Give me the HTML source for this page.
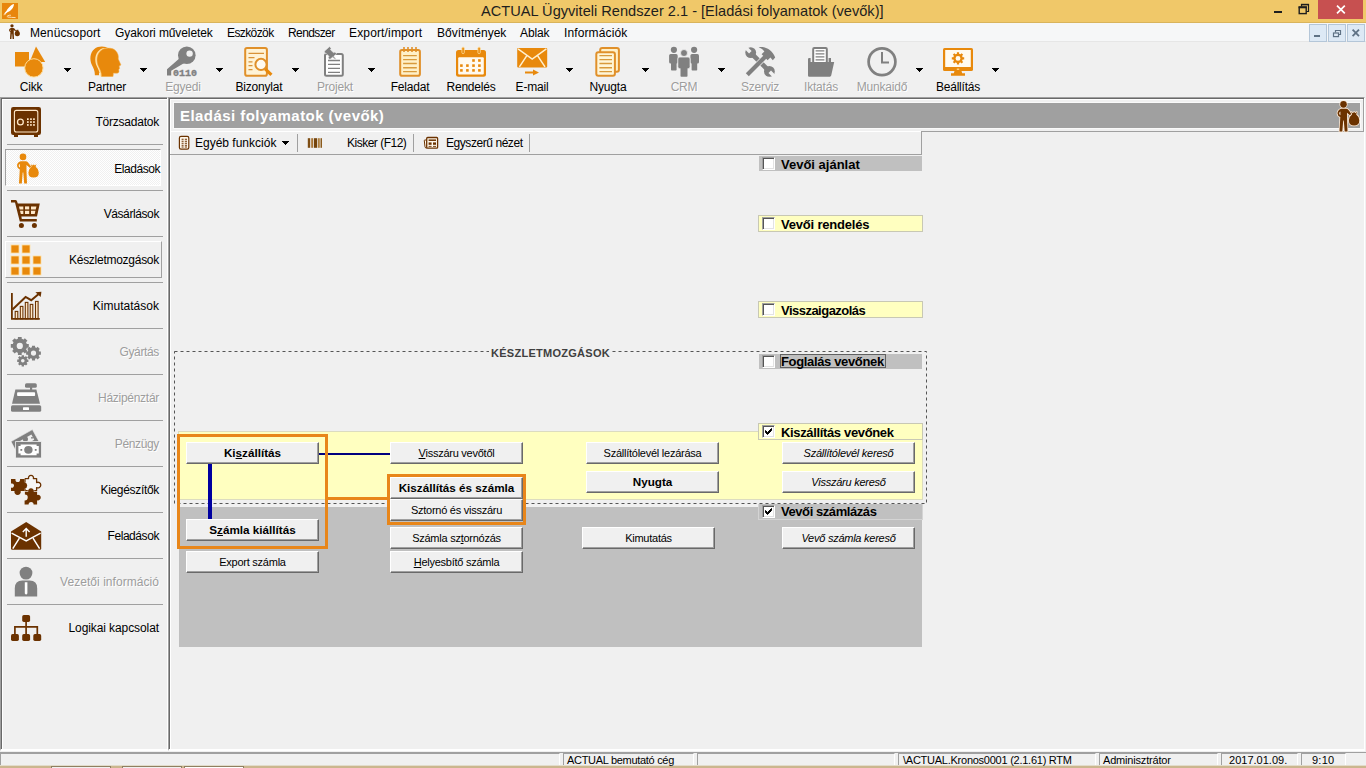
<!DOCTYPE html>
<html><head><meta charset="utf-8">
<style>
html,body{margin:0;padding:0;}
body{width:1366px;height:768px;overflow:hidden;background:#f0f0f0;position:relative;font-family:"Liberation Sans",sans-serif;font-size:12px;color:#000;}
.a{position:absolute;}
.t{position:absolute;white-space:nowrap;line-height:14px;}
svg{position:absolute;overflow:visible;}
/* title */
#title{left:0;top:0;width:1366px;height:22px;background:#f0c869;}
#titleline{left:0;top:22px;width:1366px;height:1px;background:#d9b45c;}
#menu{left:0;top:23px;width:1366px;height:18px;background:#f6f7f8;}
.mi{top:26px;}
.mdi{top:24px;width:16px;height:16px;background:#dde9f5;border:1px solid #b4c6d8;box-sizing:content-box;}
/* toolbar */
.tl{top:80px;width:76px;text-align:center;letter-spacing:-0.2px;}
.dis{color:#9d9d9d;text-shadow:1px 1px 0 #fff;}
.arr{top:68px;width:7px;height:4px;background:linear-gradient(#000,#000) 0 0/7px 1px no-repeat,linear-gradient(#000,#000) 1px 1px/5px 1px no-repeat,linear-gradient(#000,#000) 2px 2px/3px 1px no-repeat,linear-gradient(#000,#000) 3px 3px/1px 1px no-repeat;}
/* panels */
.sunk{box-sizing:border-box;border-top:1px solid #a0a0a0;border-left:1px solid #a0a0a0;border-right:1px solid #fff;border-bottom:2px solid #fff;box-shadow:inset 1px 1px 0 #696969,inset 2px 2px 0 #fff;}
.sep{left:7px;width:156px;height:1px;background:#a0a0a0;}
.sl{left:40px;width:119px;text-align:right;}
/* classic button */
.btn{box-sizing:border-box;height:22px;width:133px;background:#f0f0f0;border-top:1px solid #fff;border-left:1px solid #fff;border-right:1px solid #696969;border-bottom:1px solid #696969;box-shadow:inset -1px -1px 0 #a0a0a0;text-align:center;font-size:11px;letter-spacing:-0.25px;line-height:20px;white-space:nowrap;}
.btn b{font-size:11.7px;letter-spacing:0;}
.btn i{font-style:italic;}
.cb{width:13px;height:13px;box-sizing:border-box;background:#fff;border-top:1px solid #a0a0a0;border-left:1px solid #a0a0a0;border-right:1px solid #fff;border-bottom:1px solid #fff;box-shadow:inset 1px 1px 0 #555,inset -1px -1px 0 #e3e3e3;}
.lab{font-weight:bold;font-size:13px;line-height:15px;}
.ybar{box-sizing:border-box;background:#ffffc0;border:1px solid #c8c8b4;}
.sbar{background:#c0c0c0;}
.sp{top:753px;height:13px;box-sizing:border-box;border-top:1px solid #a0a0a0;border-left:1px solid #a0a0a0;border-right:1px solid #fff;}
.st{top:754px;z-index:3;font-size:11px;line-height:12px;}
</style></head><body>

<!-- TITLE BAR -->
<div id="title" class="a"></div>
<div id="titleline" class="a"></div>
<div class="t" style="left:481px;top:2px;font-size:14.6px;line-height:18px;color:#1e1e1e;">ACTUAL Ügyviteli Rendszer 2.1 - [Eladási folyamatok (vevők)]</div>
<div class="a" style="left:1318px;top:0;width:45px;height:19px;background:#c75050"></div>
<div class="a" style="left:1274px;top:11px;width:8px;height:2px;background:#1e1e1e"></div>

<!-- MENU BAR -->
<div id="menu" class="a"></div>
<div class="a" style="left:0;top:41px;width:1366px;height:1px;background:#e6e6e6"></div>
<div class="t mi" style="left:30px;letter-spacing:0.1px">Menücsoport</div>
<div class="t mi" style="left:115px;letter-spacing:-0.1px">Gyakori műveletek</div>
<div class="t mi" style="left:227px;letter-spacing:-0.6px">Eszközök</div>
<div class="t mi" style="left:288px;letter-spacing:-0.6px">Rendszer</div>
<div class="t mi" style="left:349px;letter-spacing:0.15px">Export/import</div>
<div class="t mi" style="left:437px">Bővítmények</div>
<div class="t mi" style="left:520px;letter-spacing:-0.1px">Ablak</div>
<div class="t mi" style="left:564px;letter-spacing:0.12px">Információk</div>
<div class="a mdi" style="left:1309px"></div>
<div class="a mdi" style="left:1328px"></div>
<div class="a mdi" style="left:1347px"></div>

<!-- TOOLBAR -->
<div id="tb">
<div class="t tl" style="left:-7px">Cikk</div><div class="a arr" style="left:64px"></div>
<div class="t tl" style="left:69px">Partner</div><div class="a arr" style="left:140px"></div>
<div class="t tl dis" style="left:145px">Egyedi</div><div class="a arr" style="left:216px"></div>
<div class="t tl" style="left:221px">Bizonylat</div><div class="a arr" style="left:292px"></div>
<div class="t tl dis" style="left:297px">Projekt</div><div class="a arr" style="left:368px"></div>
<div class="t tl" style="left:372px">Feladat</div>
<div class="t tl" style="left:433px">Rendelés</div>
<div class="t tl" style="left:494px">E-mail</div><div class="a arr" style="left:566px"></div>
<div class="t tl" style="left:570px">Nyugta</div><div class="a arr" style="left:642px"></div>
<div class="t tl dis" style="left:646px">CRM</div><div class="a arr" style="left:718px"></div>
<div class="t tl dis" style="left:722px">Szerviz</div>
<div class="t tl dis" style="left:783px">Iktatás</div>
<div class="t tl dis" style="left:844px">Munkaidő</div><div class="a arr" style="left:916px"></div>
<div class="t tl" style="left:920px">Beállítás</div><div class="a arr" style="left:992px"></div>
</div>

<!-- TOOLBAR ICONS -->
<svg width="1366" height="110" style="left:0;top:0" id="tbicons">
<defs>
<path id="head" d="M101.5 76.7 C101.5 72 100 69.5 98.5 66.5 C96 61 96.5 54 101 50.5 C105 47.3 112 47.3 115.5 50.5 C118 53 118.8 56 118.3 59 L121 65 L119.2 66 L119.6 68.6 L118.8 69.6 L119 72 C118.5 73.5 116 73.4 113.5 73 L113 76.7 Z"/>
</defs>
<!-- Cikk -->
<rect x="15" y="52" width="14" height="14.5" fill="#e8890c"/>
<path d="M36 46.6 L45.2 62 L29.6 62Z" fill="#e8890c"/>
<circle cx="33.9" cy="67.9" r="9.2" fill="#e8890c" stroke="#ffdf9e" stroke-width="1"/>
<!-- Partner -->
<use href="#head" transform="translate(-6.6,-1.5)" fill="#e8890c"/>
<rect x="99" y="73" width="3" height="4" fill="#f0f0f0"/>
<use href="#head" transform="translate(-1.7,-0.3)" fill="#ffe6b0"/>
<use href="#head" fill="#e8890c" stroke="#f3b457" stroke-width="0.5"/>
<rect x="100" y="76.9" width="15" height="2" fill="#f0f0f0"/>
<!-- Egyedi -->
<circle cx="186.8" cy="55.2" r="8.8" fill="#808080"/>
<circle cx="189.6" cy="53.6" r="3.2" fill="#f0f0f0"/>
<path d="M181 57 L167 69.2 L167 75.6 L171.2 75.6 L171.2 70.8 L186 62Z" fill="#808080"/>
<text x="173" y="75.7" font-family="Liberation Mono, monospace" font-weight="bold" font-size="9.8" textLength="24" lengthAdjust="spacingAndGlyphs" fill="#808080" stroke="#808080" stroke-width="0.35">0110</text>
<!-- Bizonylat -->
<rect x="245.2" y="48.1" width="21.7" height="27.6" rx="1.8" fill="#fff3d6" stroke="#e0902a" stroke-width="2"/>
<path d="M248.5 53.4H264 M248.5 57.6H254.5 M248.5 61.8H252.5 M248.5 65.7H252.5 M248.5 69.7H252.5" stroke="#d89238" stroke-width="1.2"/>
<circle cx="261" cy="64.4" r="5.6" fill="#fffaf0" stroke="#e0902a" stroke-width="2"/>
<path d="M265.2 68.8 L271.4 74.8" stroke="#e8890c" stroke-width="3.2"/>
<!-- Projekt -->
<rect x="325" y="54" width="17.8" height="21.7" rx="1.5" fill="#fff" stroke="#808080" stroke-width="2"/>
<path d="M328 60.5H340 M328 64.4H340 M328 68.4H340 M328 72.3H340" stroke="#808080" stroke-width="1.3"/>
<path d="M324.3 51.3 L329.6 46.6 L331.2 48.4 L330.3 49.6 L333.4 52.6 L335 52 L336.6 53.8 L333.8 56.2 L336 59 L335.4 59.5 L332.6 57.2 L329.8 59.6 L328.2 57.8 L329 56.4 L326 53.2 L325 53.4Z" fill="#808080" stroke="#f0f0f0" stroke-width="0.6"/>
<!-- Feladat -->
<rect x="400.2" y="50" width="19.7" height="25.7" rx="1.8" fill="#fff0c8" stroke="#e0902a" stroke-width="2"/>
<path d="M404 47V52 M408 47V52 M412 47V52 M416 47V52" stroke="#e0902a" stroke-width="1.6"/>
<path d="M403.1 55.6H416.8 M403.1 59.6H416.8 M403.1 63.5H416.8 M403.1 67.7H416.8 M403.1 71.6H416.8" stroke="#d89a3c" stroke-width="1.4"/>
<!-- Rendeles -->
<rect x="456" y="50" width="30" height="26.7" rx="2.5" fill="#e8890c"/>
<rect x="458.2" y="57.2" width="25.6" height="17.4" rx="1" fill="#fffaf0"/>
<rect x="461.9" y="47.2" width="2.4" height="6.4" rx="1" fill="#e8890c" stroke="#ffdf9e" stroke-width="0.8"/>
<rect x="477.9" y="47.2" width="2.4" height="6.4" rx="1" fill="#e8890c" stroke="#ffdf9e" stroke-width="0.8"/>
<g fill="#e8890c">
<rect x="472.2" y="59.2" width="2.6" height="2.6"/><rect x="478.1" y="59.2" width="2.6" height="2.6"/>
<rect x="460.1" y="64.3" width="2.6" height="2.6"/><rect x="466.1" y="64.3" width="2.6" height="2.6"/><rect x="472.2" y="64.3" width="2.6" height="2.6"/><rect x="478.1" y="64.3" width="2.6" height="2.6"/>
<rect x="460.1" y="69.1" width="2.6" height="2.6"/><rect x="466.1" y="69.1" width="2.6" height="2.6"/><rect x="472.2" y="69.1" width="2.6" height="2.6"/><rect x="478.1" y="69.1" width="2.6" height="2.6"/>
</g>
<!-- E-mail -->
<rect x="517.2" y="48" width="30" height="19.5" rx="1" fill="#e8890c"/>
<path d="M518 48.8 L532.2 59 L546.4 48.8" stroke="#fff0d0" stroke-width="1.5" fill="none"/>
<path d="M527 55.4 L519.4 66.8 M537.4 55.4 L545 66.8" stroke="#fff0d0" stroke-width="1.5"/>
<path d="M525 71.6 H533 V69.6 L539 72.6 L533 75.6 V73.6 H525Z" fill="#e8890c"/>
<!-- Nyugta -->
<rect x="600.2" y="48.1" width="18.7" height="23.7" rx="2" fill="#fff0c8" stroke="#e0902a" stroke-width="2"/>
<rect x="596.3" y="52.2" width="18.6" height="23.5" rx="2" fill="#fff6d8" stroke="#e0902a" stroke-width="2"/>
<path d="M599.4 55.6H612 M599.4 59.6H612 M599.4 63.5H612 M599.4 67.7H612 M599.4 71.6H612" stroke="#d89a3c" stroke-width="1.4"/>
<!-- CRM -->
<g fill="#808080">
<circle cx="673.9" cy="49.8" r="3.1"/><rect x="669.1" y="54.1" width="8.6" height="9.5" rx="1.6"/><rect x="671" y="60" width="5.6" height="10.6" rx="0.8"/>
<circle cx="694.1" cy="49.8" r="3.1"/><rect x="690.4" y="54.1" width="8.6" height="9.5" rx="1.6"/><rect x="691.6" y="60" width="5.6" height="10.6" rx="0.8"/>
<circle cx="684" cy="53" r="3.5" stroke="#f0f0f0" stroke-width="0.8"/>
<rect x="677.8" y="57" width="12.3" height="11.8" rx="2" stroke="#f0f0f0" stroke-width="0.8"/><rect x="680.5" y="66" width="7" height="10.7" rx="0.8"/>
</g>
<!-- Szerviz -->
<g>
<path d="M752 54 L768.5 70.5" stroke="#808080" stroke-width="4.6"/>
<circle cx="750.7" cy="52.6" r="5.4" fill="#808080"/>
<rect x="-1.8" y="-7.4" width="3.6" height="6.6" transform="translate(750.9,52.8) rotate(-45)" fill="#f0f0f0"/>
<circle cx="769.4" cy="71.4" r="5.4" fill="#808080"/>
<rect x="-1.8" y="-7.4" width="3.6" height="6.6" transform="translate(769.2,71.2) rotate(135)" fill="#f0f0f0"/>
<path d="M747.3 74.7 L765.5 56.5" stroke="#f0f0f0" stroke-width="5.6"/>
<path d="M747.3 74.7 L765.5 56.5" stroke="#808080" stroke-width="4.2"/>
<path d="M758.6 47.3 C765 45.8 772.4 50 775.2 57.6 L772.8 60.2 L770.4 57.6 L767.6 60.2 L761.6 54.2 L764.4 51.4 C763 49.6 761 48.4 758.6 47.3Z" fill="#808080"/>
</g>
<!-- Iktatas -->
<rect x="813.2" y="48.1" width="13.6" height="16" rx="1" fill="#fff" stroke="#808080" stroke-width="2"/>
<path d="M815.6 50.9H824.4 M815.6 53.9H824.4 M815.6 56.9H824.4 M815.6 59.9H824.4" stroke="#808080" stroke-width="1.3"/>
<path d="M808 59 Q808 58 809.3 58 L810.6 58 L810.6 62 L834.2 62 L831.2 75.6 Q831 76.7 829.8 76.7 L809.2 76.7 Q808 76.7 808 75.5Z" fill="#808080"/>
<rect x="828.6" y="58" width="2.4" height="5" fill="#808080"/>
<!-- Munkaido -->
<circle cx="882" cy="61.8" r="13.4" fill="none" stroke="#808080" stroke-width="2.7"/>
<path d="M882 52 V62.4 H889" fill="none" stroke="#808080" stroke-width="2"/>
<!-- Beallitas -->
<rect x="943" y="48" width="30" height="23" rx="1.6" fill="#e8890c"/>
<rect x="945.2" y="50" width="25.6" height="17" fill="#fffaf0"/>
<g stroke="#e8890c" stroke-width="2.2">
<path d="M958 52.2V64.6 M951.8 58.4H964.2 M953.6 54 L962.4 62.8 M962.4 54 L953.6 62.8"/>
</g>
<circle cx="958" cy="58.4" r="3.6" fill="#fffaf0" stroke="#e8890c" stroke-width="2.3"/>
<rect x="956.8" y="68.6" width="2.4" height="1.2" fill="#ffdf9e"/>
<path d="M954.5 71 H961.5 L962.2 73.2 H965 V75.8 H951 V73.2 H953.8Z" fill="#e8890c"/>
</svg>

<!-- SIDEBAR PANEL -->
<div class="a sunk" style="left:0;top:97px;width:168px;height:654px;"></div>
<div id="side">
<div class="a" style="left:5px;top:149px;width:156px;height:37px;box-sizing:border-box;background:#f8f8f8 conic-gradient(#fff 25%,#f0f0f0 0 50%,#fff 0 75%,#f0f0f0 0) 0 0/2px 2px;border-top:1px solid #a0a0a0;border-left:1px solid #a0a0a0;border-right:1px solid #fff;border-bottom:1px solid #fff;"></div>
<div class="a" style="left:5px;top:241px;width:157px;height:37px;box-sizing:border-box;border:1px solid #fff;border-right-color:#a0a0a0;border-bottom-color:#a0a0a0;"></div>
<div class="a sep" style="top:144px"></div><div class="a sep" style="top:190px"></div><div class="a sep" style="top:236px"></div>
<div class="a sep" style="top:282px"></div><div class="a sep" style="top:328px"></div><div class="a sep" style="top:374px"></div>
<div class="a sep" style="top:420px"></div><div class="a sep" style="top:466px"></div><div class="a sep" style="top:512px"></div>
<div class="a sep" style="top:558px"></div><div class="a sep" style="top:604px"></div>
<div class="t sl" style="top:115px;letter-spacing:-0.23px">Törzsadatok</div>
<div class="t sl" style="top:162px;left:41px;letter-spacing:-0.45px">Eladások</div>
<div class="t sl" style="top:207px;letter-spacing:-0.4px">Vásárlások</div>
<div class="t sl" style="top:253px;letter-spacing:-0.27px">Készletmozgások</div>
<div class="t sl" style="top:299px;letter-spacing:0.02px">Kimutatások</div>
<div class="t sl dis" style="top:345px;letter-spacing:-0.36px">Gyártás</div>
<div class="t sl dis" style="top:391px;letter-spacing:-0.28px">Házipénztár</div>
<div class="t sl dis" style="top:437px;letter-spacing:-0.36px">Pénzügy</div>
<div class="t sl" style="top:483px;letter-spacing:-0.32px">Kiegészítők</div>
<div class="t sl" style="top:529px;letter-spacing:-0.43px">Feladások</div>
<div class="t sl dis" style="top:575px;letter-spacing:0.05px">Vezetői információ</div>
<div class="t sl" style="top:621px;letter-spacing:-0.09px">Logikai kapcsolat</div>
</div>

<!-- MAIN PANEL -->
<div class="a sunk" style="left:168px;top:97px;width:1197px;height:654px;"></div>
<div id="main">
<div class="a" style="left:174px;top:103px;width:1186px;height:25px;background:#a0a0a0;box-shadow:0 0 0 1px #f9f9f9"></div>
<div class="t" style="left:180px;top:106px;font-size:15px;font-weight:bold;color:#fff;line-height:19px;letter-spacing:0.45px">Eladási folyamatok (vevők)</div>
<div class="a" style="left:922px;top:131px;width:442px;height:1px;background:#a0a0a0"></div>
<div class="a" style="left:1363px;top:99px;width:1px;height:33px;background:#a0a0a0"></div>
<div class="a" style="left:170px;top:131px;width:751px;height:1px;background:#fff"></div>
<div class="a" style="left:921px;top:131px;width:1px;height:24px;background:#a0a0a0"></div>
<div class="a" style="left:170px;top:154px;width:752px;height:1px;background:#a0a0a0"></div>
<div class="t" style="left:195px;top:136px">Egyéb funkciók</div>
<div class="a arr" style="left:282px;top:141px"></div>
<div class="a" style="left:297px;top:134px;width:1px;height:18px;background:#a0a0a0"></div>
<div class="t" style="left:347px;top:136px;letter-spacing:-0.5px">Kisker (F12)</div>
<div class="a" style="left:413px;top:134px;width:1px;height:18px;background:#a0a0a0"></div>
<div class="t" style="left:446px;top:136px;letter-spacing:-0.44px">Egyszerű nézet</div>
<div class="a" style="left:529px;top:134px;width:1px;height:18px;background:#a0a0a0"></div>

<!-- flow area -->
<div class="a" style="left:178px;top:431px;width:745px;height:69px;background:#ffffc0;box-sizing:border-box;border:1px solid #dcdcc0;"></div>
<div class="a" style="left:179px;top:507px;width:743px;height:140px;background:#c0c0c0"></div>

<div class="a sbar" style="left:759px;top:156px;width:163px;height:15px"></div>
<div class="a ybar" style="left:758px;top:215px;width:165px;height:17px"></div>
<div class="a ybar" style="left:758px;top:301px;width:165px;height:17px"></div>
<div class="a sbar" style="left:759px;top:354px;width:163px;height:15px"></div>
<div class="a ybar" style="left:758px;top:423px;width:165px;height:17px"></div>
<div class="a sbar" style="left:758px;top:504px;width:165px;height:16px;box-sizing:border-box;border:1px solid #d4d4d4;border-top:none"></div>

<div class="a cb" style="left:762px;top:157px"></div><div class="t lab" style="left:781px;top:157px;letter-spacing:0px">Vevői ajánlat</div>
<div class="a cb" style="left:762px;top:217px"></div><div class="t lab" style="left:781px;top:217px;letter-spacing:-0.2px">Vevői rendelés</div>
<div class="a cb" style="left:762px;top:303px"></div><div class="t lab" style="left:781px;top:303px;letter-spacing:-0.52px">Visszaigazolás</div>
<div class="a cb" style="left:762px;top:355px"></div><div class="t lab" style="left:781px;top:354px;letter-spacing:-0.35px">Foglalás vevőnek</div>
<div class="a cb" style="left:762px;top:425px"></div><div class="t lab" style="left:781px;top:425px;letter-spacing:-0.35px">Kiszállítás vevőnek</div>
<div class="a cb" style="left:762px;top:505px"></div><div class="t lab" style="left:781px;top:504px;letter-spacing:-0.43px">Vevői számlázás</div>

<!-- checkmarks & focus -->
<svg width="1366" height="768" style="left:0;top:0">
<path d="M765.5 430.5 L767.5 432.5 L771.5 428.5 V430.5 L767.5 434.5 L765.5 432.5Z" fill="#000" stroke="#000" stroke-width="1" stroke-linejoin="miter"/>
<path d="M765.5 510.5 L767.5 512.5 L771.5 508.5 V510.5 L767.5 514.5 L765.5 512.5Z" fill="#000" stroke="#000" stroke-width="1" stroke-linejoin="miter"/>
<rect x="780.5" y="354.5" width="105" height="13" fill="none" stroke="#000" stroke-width="1" stroke-dasharray="1 1"/>
</svg>
<!-- dashed group -->
<svg width="1366" height="768" style="left:0;top:0">
<path d="M174.5 351.5H926.5V503.5H174.5Z" fill="none" stroke="#555" stroke-width="1" stroke-dasharray="3 3"/>
</svg>
<div class="t" style="left:489px;top:345.5px;font-weight:bold;font-size:11px;letter-spacing:0.27px;background:#f0f0f0;padding:0 1px 0 2px;color:#404040">KÉSZLETMOZGÁSOK</div>

<!-- lines -->
<div class="a" style="left:208px;top:464px;width:4px;height:55px;background:#0000a0"></div>
<div class="a" style="left:319px;top:453px;width:71px;height:2px;background:#000080"></div>
<div class="a" style="left:177px;top:434px;width:151px;height:115px;box-sizing:border-box;border:3px solid #e8861a"></div>
<div class="a" style="left:328px;top:497px;width:60px;height:3px;background:#e8861a"></div>
<div class="a" style="left:387px;top:474px;width:139px;height:51px;box-sizing:border-box;border:3px solid #e8861a"></div>

<!-- buttons -->
<div class="a btn" style="left:186px;top:442px"><b>Ki<u>s</u>zállítás</b></div>
<div class="a btn" style="left:186px;top:519px"><b>S<u>z</u>ámla kiállítás</b></div>
<div class="a btn" style="left:186px;top:551px">Export számla</div>
<div class="a btn" style="left:390px;top:442px"><u>V</u>isszáru vevőtől</div>
<div class="a btn" style="left:390px;top:477px"><b>Kiszállítás és számla</b></div>
<div class="a btn" style="left:390px;top:499px">Sztornó és visszáru</div>
<div class="a btn" style="left:390px;top:527px">Számla sz<u>t</u>ornózás</div>
<div class="a btn" style="left:390px;top:551px"><u>H</u>elyesbítő számla</div>
<div class="a btn" style="left:586px;top:442px">Szállítólevél lezárása</div>
<div class="a btn" style="left:586px;top:471px"><b>Nyugta</b></div>
<div class="a btn" style="left:582px;top:527px">Kimutatás</div>
<div class="a btn" style="left:782px;top:442px"><i>Szállítólevél kereső</i></div>
<div class="a btn" style="left:782px;top:471px"><i>Visszáru kereső</i></div>
<div class="a btn" style="left:782px;top:527px"><i>Vevő számla kereső</i></div>
</div>

<!-- SIDEBAR + SMALL ICONS -->
<svg width="1366" height="768" style="left:0;top:0" id="sideicons">
<defs>
<g id="pbag">
<!-- person with bag, drawn in a 24x30 box -->
<circle cx="6" cy="3.7" r="3.3"/>
<path d="M3.6 8 H8.6 Q10 8 10.8 9 L14.2 13.4 L13 14.8 L9.5 11.8 V17.6 L10 30.2 H7.2 L6.3 19.4 H5.7 L4.8 30.2 H2 L2.7 17.6 L2.8 16.2 Q0 14.8 0 12.6 Q0 9.4 3.6 8Z M2.9 10.8 Q1.7 11.6 1.7 12.6 Q1.7 13.6 2.9 14.4Z"/>
<path d="M13.8 10.8 L15.2 12.4 L16.6 11.2 L18 12.4 L19.4 10.8 L18.7 13.6 Q21.8 15.8 21.8 19.2 Q21.8 24.4 16.6 24.4 Q11.4 24.4 11.4 19.2 Q11.4 15.8 14.5 13.6Z"/>
</g>
<g id="gear8">
<path d="M0 -1 V1 M-1 0 H1 M-0.707 -0.707 L0.707 0.707 M0.707 -0.707 L-0.707 0.707" stroke-width="0.42"/>
</g>
</defs>

<!-- app icon -->
<rect x="2" y="3" width="16" height="16" fill="#e8860c"/>
<path d="M14 4 C11.4 4.6 8.2 7.6 6.6 10.8 L4.2 13.6 L5 14.2 L7.8 12 C11.4 10.8 13.8 7.4 14 4Z" fill="#fff"/><path d="M3.6 14.8 L5.6 14.4" stroke="#ffe0b0" stroke-width="0.8"/>
<path d="M6.8 16.6 C8.5 15 10 15 11 15.4 M7.5 17 C10 17.4 13 17.4 15.6 17.6" stroke="#ffe8c0" stroke-width="0.9" fill="none"/>
<!-- menu icon -->
<use href="#pbag" transform="translate(9,24) scale(0.5)" fill="#6b3200"/>
<!-- header icon -->
<use href="#pbag" transform="translate(1337.5,100.6) scale(1,1.02)" fill="#6b3200" stroke="#fbe9d6" stroke-width="1.6" paint-order="stroke"/>

<!-- Torzsadatok: safe -->
<rect x="11" y="107" width="30" height="28" rx="2.2" fill="#6b3200"/>
<rect x="14" y="135" width="4" height="2" fill="#6b3200"/><rect x="34" y="135" width="4" height="2" fill="#6b3200"/>
<rect x="14.4" y="110.4" width="23.4" height="21.6" rx="2" fill="none" stroke="#ffe8c8" stroke-width="1.1"/>
<circle cx="20.4" cy="122" r="2.9" fill="none" stroke="#ffe8c8" stroke-width="1.3"/>
<g fill="#ffe8c8">
<rect x="27" y="118.3" width="1.7" height="1.7"/><rect x="30.1" y="118.3" width="1.7" height="1.7"/><rect x="33.1" y="118.3" width="1.7" height="1.7"/>
<rect x="27" y="121.2" width="1.7" height="1.7"/><rect x="30.1" y="121.2" width="1.7" height="1.7"/><rect x="33.1" y="121.2" width="1.7" height="1.7"/>
<rect x="27" y="124.1" width="1.7" height="1.7"/><rect x="30.1" y="124.1" width="1.7" height="1.7"/><rect x="33.1" y="124.1" width="1.7" height="1.7"/>
</g>
<!-- Eladasok -->
<use href="#pbag" transform="translate(17,153.2)" fill="#e8890c"/>
<!-- Vasarlasok: cart -->
<g fill="#6b3200">
<path d="M11 200 H15.4 Q16.6 200 17 201.2 L17.8 203.6 H39.8 L37 216.6 H21.4 L21.8 219 H36.8 V221.4 H19.8 L15 202.4 H11Z"/>
<circle cx="21.4" cy="225.4" r="2.5"/><circle cx="34.4" cy="225.4" r="2.5"/>
</g>
<g fill="#ffe8c8">
<path d="M19 206.4H23.3V209.4H19.7Z"/><rect x="25" y="206.4" width="4.2" height="3"/><path d="M31 206.4H36.4L35.7 209.4H31Z"/>
<path d="M20 210.8H23.3V214H20.8Z"/><rect x="25" y="210.8" width="4.2" height="3.2"/><path d="M31 210.8H35.4L34.7 214H31Z"/>
</g>
<!-- Keszletmozgasok -->
<g fill="#e8890c" stroke="#ffdf9e" stroke-width="0.8">
<rect x="11" y="245" width="8" height="8"/><rect x="22" y="245" width="8" height="8"/>
<rect x="11" y="256" width="8" height="8"/><rect x="22" y="256" width="8" height="8"/><rect x="33" y="256" width="8" height="8"/>
<rect x="11" y="267" width="8" height="8"/><rect x="22" y="267" width="8" height="8"/><rect x="33" y="267" width="8" height="8"/>
</g>
<!-- Kimutatasok -->
<g fill="#ffe8c8" stroke="#6b3200" stroke-width="1.1">
<rect x="15.2" y="311.4" width="2.6" height="7.4"/><rect x="20.3" y="306.4" width="2.6" height="12.4"/><rect x="25.3" y="302.4" width="2.6" height="16.4"/><rect x="30.2" y="304.4" width="2.6" height="14.4"/><rect x="35.5" y="301.4" width="2.6" height="17.4"/>
</g>
<path d="M11.9 293 V318.9 H39.8" fill="none" stroke="#6b3200" stroke-width="1.8"/>
<path d="M12.5 309.4 L25.6 297 L31.2 300.2 L38.4 294.2" fill="none" stroke="#6b3200" stroke-width="2"/>
<path d="M35.4 292.3 L41.4 291.8 L40.7 297Z" fill="#6b3200"/>
<!-- Gyartas: gears -->
<g stroke="#808080" fill="none">
<use href="#gear8" transform="translate(19.8,345.9) scale(9)"/>
<use href="#gear8" transform="translate(33.5,353.1) scale(7.4)"/>
<use href="#gear8" transform="translate(22.8,360.8) scale(5.6)"/>
</g>
<circle cx="19.8" cy="345.9" r="5.2" fill="#f0f0f0" stroke="#808080" stroke-width="4.2"/>
<circle cx="33.5" cy="353.1" r="4.3" fill="#f0f0f0" stroke="#808080" stroke-width="3.4"/>
<circle cx="22.8" cy="360.8" r="3.1" fill="#f0f0f0" stroke="#808080" stroke-width="2.6"/>
<!-- Hazipenztar -->
<g fill="#808080">
<rect x="25" y="383.2" width="11.8" height="4.6" rx="1.6"/><rect x="30" y="387" width="2.2" height="3"/>
<path d="M15.4 389.4 H36.4 L40 403.8 H12Z"/>
<rect x="11" y="405.2" width="30.2" height="6.6" rx="1.6"/>
</g>
<rect x="17.1" y="392.2" width="18" height="3.8" rx="0.8" fill="#fff"/>
<rect x="23" y="407.3" width="6" height="2.7" rx="0.6" fill="#fff"/>
<!-- Penzugy -->
<path d="M11 441.6 L32.4 429.6 L38.8 441.2 L17 453Z" fill="#808080" stroke="#f0f0f0" stroke-width="0.6"/>
<path d="M20 441 L31.4 434.6 L34.2 439.8 L26 444.4Z" fill="#f0f0f0"/>
<circle cx="25.4" cy="439" r="2.6" fill="#808080"/><rect x="31.2" y="437" width="1.6" height="1.6" fill="#808080"/>
<rect x="15.6" y="441.6" width="25.8" height="16.4" fill="#808080" stroke="#f0f0f0" stroke-width="0.8"/>
<path d="M20.6 444.4 H36.6 V446 H38.8 V453.6 H36.6 V455.2 H20.6 V453.6 H18.4 V446 H20.6Z" fill="#fff"/>
<ellipse cx="28.4" cy="449.8" rx="4.2" ry="3.9" fill="#808080"/>
<rect x="20.4" y="449" width="1.8" height="1.8" fill="#808080"/><rect x="34.8" y="449" width="1.8" height="1.8" fill="#808080"/>
<!-- Kiegeszitok: puzzle -->
<g>
<path d="M25.1 478.6 H28.6 A2.52 2.52 0 1 1 33.4 478.6 H36.6 V482.6 A2.84 2.84 0 1 1 36.6 487.6 V490.6 H25.1Z" fill="#f6f6f6" stroke="#6b3200" stroke-width="1.3" stroke-linejoin="round"/>
<path d="M11 479 H15.5 A2.37 2.37 0 1 0 20 479 H24.7 V482.6 A3.05 3.05 0 0 1 24.7 488.6 V491 H20.7 A3.2 3.2 0 1 1 14.5 491 H11 V487.6 A2.17 2.17 0 1 0 11 483.6Z" fill="#6b3200" stroke="#f4efe8" stroke-width="0.9" paint-order="stroke"/>
<path d="M25.1 491.7 H28.3 A2.79 2.79 0 1 1 33.7 491.7 H37.1 V495 A2.76 2.76 0 1 1 37.1 500.2 V504.6 H33.6 A2.5 2.5 0 1 0 28.6 504.6 H24.6 V500.4 A3 3 0 0 0 24.9 494.4 V491.7Z" fill="#6b3200" stroke="#f4efe8" stroke-width="0.9" paint-order="stroke"/>
</g>
<!-- Feladasok -->
<path d="M11 531.4 L26.2 522 L41.2 531.4 V548.6 Q41.2 549.8 40 549.8 H12.2 Q11 549.8 11 548.6Z" fill="#6b3200"/>
<path d="M11.6 533.2 L26.2 541 L40.6 533.2" fill="none" stroke="#fff" stroke-width="1.5"/>
<path d="M19.4 538.2 L12.8 548.6 M33 538.2 L39.6 548.6" stroke="#fff" stroke-width="1.5"/>
<path d="M26.2 529 V536.8 M22.8 532 L26.2 528.6 L29.6 532" fill="none" stroke="#fff" stroke-width="1.4"/>
<!-- Vezetoi informacio -->
<circle cx="26" cy="573.1" r="6.4" fill="#808080"/>
<path d="M14.8 596.4 V588.4 Q14.8 580.6 22.4 580.6 H29.6 Q37.2 580.6 37.2 588.4 V596.4Z" fill="#808080"/>
<path d="M24.8 582.2 H27.4 L27.4 593.4 L26.1 594.8 L24.8 593.4Z" fill="#fff"/>
<!-- Logikai kapcsolat -->
<g fill="#6b3200">
<rect x="22.2" y="615.1" width="7.9" height="6.8" rx="1.6"/>
<rect x="11" y="634.1" width="7.9" height="6.8" rx="1.6"/><rect x="22.2" y="634.1" width="7.9" height="6.8" rx="1.6"/><rect x="33.3" y="634.1" width="7.9" height="6.8" rx="1.6"/>
</g>
<path d="M26.1 621 V635 M14.9 635 V626.8 H37.3 V635" fill="none" stroke="#6b3200" stroke-width="1.7"/>

<!-- Egyeb funkciok icon -->
<rect x="179.4" y="136.4" width="9.4" height="12.8" rx="1.6" fill="#fff8ec" stroke="#6b3200" stroke-width="1.2"/>
<path d="M181.6 139.2H183.6 M184.8 139.2H187 M181.6 141.2H183.6 M184.8 141.2H187 M181.6 143.2H183.6 M184.8 143.2H187 M181.6 145.2H183.6 M184.8 145.2H187 M181.6 147H183.6 M184.8 147H187" stroke="#6b3200" stroke-width="1.1"/>
<!-- barcode -->
<g>
<rect x="307.8" y="138.2" width="2.4" height="9.6" fill="#7e4e14"/><rect x="311.2" y="138.2" width="1.9" height="9.6" fill="#a87434"/>
<rect x="313.9" y="138.2" width="3.2" height="9.6" fill="#74440c"/><rect x="317.8" y="138.2" width="2" height="9.6" fill="#b08040"/>
<rect x="320.5" y="138.2" width="1.5" height="9.6" fill="#8a5a1c"/>
</g>
<!-- newspaper -->
<path d="M426.6 140 H424.8 Q424.2 140 424.3 140.8 L425 146.8 Q425.3 148.2 426.6 148.2" fill="#fff8ec" stroke="#6b3200" stroke-width="1"/>
<rect x="426.7" y="137.5" width="10.9" height="10.7" rx="1" fill="#fff8ec" stroke="#6b3200" stroke-width="1.3"/>
<path d="M428.6 140.2H436" stroke="#6b3200" stroke-width="1.5"/>
<rect x="428.6" y="142.4" width="3" height="2.4" fill="#6b3200"/><rect x="433" y="142.4" width="3" height="2.4" fill="#6b3200"/>
<path d="M428.6 146.4H431.6 M433 146.4H436" stroke="#6b3200" stroke-width="0.9"/>

<!-- title bar controls -->
<path d="M1301.5 6.5 V4.5 H1308.5 V11.5 H1306.5" fill="none" stroke="#1e1e1e" stroke-width="1.2"/><path d="M1301 4.6H1309" stroke="#1e1e1e" stroke-width="1.6"/><path d="M1298.6 7.4H1306.8" stroke="#1e1e1e" stroke-width="1.8"/>
<rect x="1299.2" y="7" width="7" height="6.6" fill="none" stroke="#1e1e1e" stroke-width="1.4"/>
<path d="M1337 5.6 L1344.8 13.4 M1344.8 5.6 L1337 13.4" stroke="#fff" stroke-width="1.7"/>
<!-- MDI controls -->
<rect x="1314" y="35" width="6" height="2" fill="#5f7285"/>
<path d="M1335.5 32.5 V30.5 H1340.5 V34.5 H1338.5" fill="none" stroke="#5f7285" stroke-width="1.2"/>
<rect x="1333.5" y="33" width="5" height="3.6" fill="none" stroke="#5f7285" stroke-width="1.2"/>
<path d="M1352.6 29.6 L1359 36.2 M1359 29.6 L1352.6 36.2" stroke="#5f7285" stroke-width="1.8"/>
</svg>

<!-- STATUS BAR -->
<div class="a" style="left:0;top:752px;width:1366px;height:1px;background:#a0a0a0"></div>
<div class="a sp" style="left:0;width:560px"></div>
<div class="a sp" style="left:563px;width:131px"></div>
<div class="a sp" style="left:697px;width:198px"></div>
<div class="a sp" style="left:898px;width:198px"></div>
<div class="a sp" style="left:1099px;width:119px"></div>
<div class="a sp" style="left:1221px;width:77px"></div>
<div class="a sp" style="left:1301px;width:45px"></div>
<div class="t st" style="left:567px;letter-spacing:-0.3px">ACTUAL bemutató cég</div>
<div class="t st" style="left:903px;letter-spacing:-0.25px">\ACTUAL.Kronos0001 (2.1.61) RTM</div>
<div class="t st" style="left:1103px;letter-spacing:-0.18px">Adminisztrátor</div>
<div class="t st" style="left:1229px;letter-spacing:0.01px">2017.01.09.</div>
<div class="t st" style="left:1312px;letter-spacing:0.24px">9:10</div>
<div class="a" style="left:0;top:765px;width:1366px;height:1px;background:#e2dccb"></div>
<div class="a" style="left:0;top:766px;width:1366px;height:2px;background:#cbb68e"></div>
<div class="a" style="left:51px;top:766px;width:60px;height:2px;box-sizing:border-box;background:#f0f0f0;border-top:1px solid #8e7f60;border-left:1px solid #8e7f60;border-right:1px solid #8e7f60"></div>
<div class="a" style="left:122px;top:766px;width:60px;height:2px;box-sizing:border-box;background:#f0f0f0;border-top:1px solid #8e7f60;border-left:1px solid #8e7f60;border-right:1px solid #8e7f60"></div>
<div class="a" style="left:184px;top:766px;width:60px;height:2px;box-sizing:border-box;background:#fff;border-top:1px solid #8e7f60;border-left:1px solid #8e7f60;border-right:1px solid #8e7f60"></div>

</body></html>
